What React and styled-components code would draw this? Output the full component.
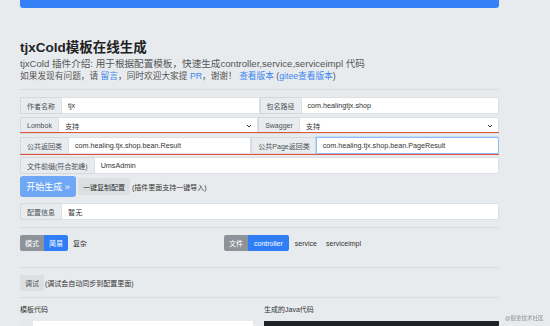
import React from "react";
import styled, { createGlobalStyle } from "styled-components";

const Global = createGlobalStyle`
  html, body {
    margin: 0;
    background: #e8ebee;
    font-family: "Liberation Sans", "Noto Sans CJK SC", sans-serif;
    color: #333;
    overflow: hidden;
  }
`;

const Page = styled.div`
  width: 479px;
  margin-left: 20px;
  height: 326px;
  overflow: hidden;
`;

const TopBar = styled.div`
  height: 8px;
  background: #3580f6;
  border-radius: 0 0 3px 3px;
`;

const Title = styled.h1`
  margin: 30px 0 0;
  font-size: 13.5px;
  line-height: 19px;
  font-weight: 700;
  color: #222;
`;

const Desc = styled.p`
  margin: 0;
  font-size: ${(p) => p.$fs || "9.2px"};
  line-height: 13px;
  color: #555;
  white-space: nowrap;
`;

const A = styled.span`
  color: #3a86f0;
`;

const Rule = styled.hr`
  margin: ${(p) => p.$m || "7px 0"};
  border: 0;
  border-top: 1px solid #d9dde1;
`;

const Rows = styled.div`
  display: flex;
  flex-direction: column;
  gap: 3px;
  margin-top: ${(p) => p.$mt || "0"};
`;

const Group = styled.div`
  position: relative;
  display: flex;
  height: 17px;
  font-size: 7px;
`;

const Highlight = styled.div`
  position: absolute;
  left: -11px;
  right: -27px;
  top: -5px;
  bottom: -1px;
  border: 1.5px solid #e2553b;
  border-radius: 3px;
  pointer-events: none;
`;

const Addon = styled.div`
  flex: none;
  display: flex;
  align-items: center;
  padding: 0 6px;
  background: #e9ecef;
  border: 1px solid #d4d8dc;
  border-right: 0;
  border-radius: ${(p) => (p.$first ? "2px 0 0 2px" : "0")};
  color: #495057;
  white-space: nowrap;
  box-sizing: border-box;
`;

const Field = styled.div`
  flex: 1 1 0;
  min-width: 0;
  display: flex;
  align-items: center;
  justify-content: space-between;
  padding: 0 5px 0 6px;
  background: #fff;
  border: 1px solid ${(p) => (p.$focus ? "#8dbdf7" : "#dcdfe3")};
  box-shadow: ${(p) => (p.$focus ? "0 0 0 1px rgba(128, 189, 255, 0.35)" : "none")};
  border-radius: ${(p) => (p.$last ? "0 2px 2px 0" : "0")};
  color: #333;
  box-sizing: border-box;
  white-space: nowrap;
  font-size: 7.2px;
`;

const Chevron = () => (
  <svg width="6" height="4" viewBox="0 0 6 4">
    <path d="M1 1l2 2 2-2" fill="none" stroke="#333" strokeWidth="1" />
  </svg>
);

const Actions = styled.div`
  display: flex;
  align-items: center;
  gap: 2px;
  margin-top: 2px;
`;

const Primary = styled.div`
  width: 56px;
  height: 21px;
  display: flex;
  align-items: center;
  justify-content: center;
  background: #6ea7f6;
  color: #fff;
  font-size: 9px;
  border-radius: 3px;
`;

const Secondary = styled.div`
  height: 17px;
  padding: 0 5px;
  display: flex;
  align-items: center;
  background: #dcdfe2;
  color: #333;
  border-radius: 2px;
  font-size: 7px;
`;

const Note = styled.span`
  font-size: 7px;
  color: #333;
`;

const ToggleLine = styled.div`
  display: flex;
  align-items: center;
  height: 16px;
  font-size: 7px;
`;

const Seg = styled.div`
  height: 16px;
  display: flex;
  align-items: center;
  padding: 0 ${(p) => p.$px || "5px"};
  box-sizing: border-box;
  color: #fff;
  background: ${(p) => (p.$on ? "#2f7ef6" : "#8d9399")};
  border-radius: ${(p) => (p.$first ? "2px 0 0 2px" : "0 2px 2px 0")};
`;

const Plain = styled.span`
  color: #333;
  margin-left: ${(p) => p.$ml || "6px"};
`;

const Spacer = styled.div`
  flex: none;
  width: ${(p) => p.$w}px;
`;

const Debug = styled.div`
  display: flex;
  align-items: center;
  gap: 1px;
  font-size: 7px;
`;

const GrayBtn = styled.div`
  height: 16px;
  padding: 0 5px;
  display: flex;
  align-items: center;
  background: #dcdfe2;
  color: #555;
  border-radius: 2px;
`;

const Panels = styled.div`
  display: grid;
  grid-template-columns: 233px 235px;
  column-gap: 11px;
  margin-top: 5px;
  font-size: 7px;
`;

const PanelTitle = styled.div`
  color: #333;
  height: 13px;
  line-height: 13px;
`;

const Editor = styled.div`
  margin-top: 5px;
  height: 40px;
  display: flex;
  background: ${(p) => (p.$dark ? "#212228" : "#fff")};
`;

const Gutter = styled.div`
  width: 13px;
  background: #e6e8eb;
`;

const Watermark = styled.div`
  position: fixed;
  left: 505px;
  top: 314px;
  font-size: 5.5px;
  color: #8a8f95;
  white-space: nowrap;
`;

export default function App() {
  return (
    <>
      <Global />
      <Page>
        <TopBar />
        <Title>tjxCold模板在线生成</Title>
        <Desc $fs="9.6px">
          tjxCold 插件介绍: 用于根据配置模板，快速生成controller,service,serviceimpl 代码
        </Desc>
        <Desc $fs="8.7px">
          如果发现有问题，请 <A>留言</A>，同时欢迎大家提 <A>PR</A>，谢谢！ <A>查看版本</A> (
          <A>gitee查看版本</A>)
        </Desc>
        <Rule $m="6px 0 7px" />
        <Rows>
          <Group>
            <Addon $first>作者名称</Addon>
            <Field>tjx</Field>
            <Addon>包名路径</Addon>
            <Field $last>com.healingtjx.shop</Field>
          </Group>
          <Group>
            <Addon $first>Lombok</Addon>
            <Field>
              支持
              <Chevron />
            </Field>
            <Addon>Swagger</Addon>
            <Field $last>
              支持
              <Chevron />
            </Field>
          </Group>
          <Group>
            <Highlight />
            <Addon $first>公共返回类</Addon>
            <Field>com.healing.tjx.shop.bean.Result</Field>
            <Addon>公共Page返回类</Addon>
            <Field $last $focus>
              com.healing.tjx.shop.bean.PageResult
            </Field>
          </Group>
          <Group>
            <Addon $first>文件前缀(符合驼峰)</Addon>
            <Field $last>UmsAdmin</Field>
          </Group>
        </Rows>
        <Actions>
          <Primary>开始生成 »</Primary>
          <Secondary>一键复制配置</Secondary>
          <Note>(插件里面支持一键导入)</Note>
        </Actions>
        <Rows $mt="6px">
          <Group>
            <Addon $first>配置信息</Addon>
            <Field $last>暂无</Field>
          </Group>
        </Rows>
        <Rule $m="7px 0 7px" />
        <ToggleLine>
          <Seg $first>模式</Seg>
          <Seg $on>简易</Seg>
          <Plain $ml="5px">复杂</Plain>
          <Spacer $w={137} />
          <Seg $first>文件</Seg>
          <Seg $on $px="6px">controller</Seg>
          <Plain $ml="6px">service</Plain>
          <Plain $ml="9px">serviceimpl</Plain>
        </ToggleLine>
        <Rule $m="16px 0 7px" />
        <Debug>
          <GrayBtn>调试</GrayBtn>
          <span>(调试会自动同步到配置里面)</span>
        </Debug>
        <Rule $m="6px 0 0" />
        <Panels>
          <div>
            <PanelTitle>模板代码</PanelTitle>
            <Editor>
              <Gutter />
            </Editor>
          </div>
          <div>
            <PanelTitle>生成的Java代码</PanelTitle>
            <Editor $dark />
          </div>
        </Panels>
      </Page>
      <Watermark>@掘金技术社区</Watermark>
    </>
  );
}
